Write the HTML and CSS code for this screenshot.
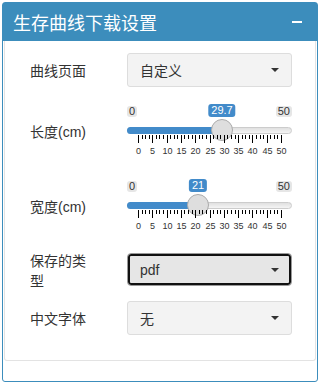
FILE: index.html
```html
<!DOCTYPE html>
<html>
  <head>
    <meta charset="utf-8">
    <title>生存曲线下载设置</title>
    <link rel="stylesheet" href="styles.css">
  </head>
  <body>
    <div class="box">
      <div class="box-header">
        <h3 class="box-title">生存曲线下载设置</h3>
        <span class="collapse-btn">
          <svg width="10" height="2" viewBox="0 0 10 2"><rect x="0" y="0" width="10" height="2" fill="#fff"/></svg>
        </span>
      </div>
      <div class="box-body">
        <div class="well">

          <div class="row row-first">
            <label class="control-label">曲线页面</label>
            <div class="select"><span>自定义</span><i class="caret"></i></div>
          </div>

          <div class="row row-slider1">
            <label class="control-label slider-label">长度(cm)</label>
            <div class="irs">
              <span class="irs-min">0</span>
              <span class="irs-max">50</span>
              <span class="irs-line"></span>
              <span class="irs-bar" style="width: 95px"></span>
              <span class="irs-single" style="left: 95px">29.7</span>
              <span class="irs-handle" style="left: 84px"></span>
              <svg class="irs-grid" width="165" height="22" viewBox="0 0 165 22"></svg>
            </div>
          </div>

          <div class="row row-slider2">
            <label class="control-label slider-label">宽度(cm)</label>
            <div class="irs">
              <span class="irs-min">0</span>
              <span class="irs-max">50</span>
              <span class="irs-line"></span>
              <span class="irs-bar" style="width: 71px"></span>
              <span class="irs-single" style="left: 71px">21</span>
              <span class="irs-handle" style="left: 60px"></span>
              <svg class="irs-grid" width="165" height="22" viewBox="0 0 165 22"></svg>
            </div>
          </div>

          <div class="row row-type">
            <label class="control-label narrow">保存的类型</label>
            <div class="select focused"><span>pdf</span><i class="caret"></i></div>
          </div>

          <div class="row row-font">
            <label class="control-label">中文字体</label>
            <div class="select"><span>无</span><i class="caret"></i></div>
          </div>

        </div>
      </div>
    </div>

    <script>
      // tick grid under each slider: 0..50, big tick every 5, 3 small ticks between
      var NS = 'http://www.w3.org/2000/svg';
      var addLine = function (svg, x, h) {
        var l = document.createElementNS(NS, 'line');
        l.setAttribute('x1', x); l.setAttribute('x2', x);
        l.setAttribute('y1', 0); l.setAttribute('y2', h);
        l.setAttribute('stroke', '#000');
        svg.appendChild(l);
      };
      document.querySelectorAll('.irs-grid').forEach(function (svg) {
        var start = 11, span = 143;
        for (var i = 0; i <= 10; i++) {
          var x = Math.round(start + span * i / 10) + 0.5;
          addLine(svg, x, 8);
          var txt = document.createElementNS(NS, 'text');
          txt.setAttribute('x', x);
          txt.setAttribute('y', 19);
          txt.setAttribute('text-anchor', 'middle');
          txt.textContent = i * 5;
          svg.appendChild(txt);
          if (i < 10) {
            for (var k = 1; k <= 3; k++) {
              addLine(svg, Math.round(start + span * (i + k / 4) / 10) + 0.5, 4);
            }
          }
        }
      });
    </script>
  </body>
</html>
```

FILE: styles.css
```css
body {
  margin: 0;
  font-family: "Liberation Sans", "Noto Sans CJK SC", sans-serif;
  color: #333;
  font-size: 14px;
}
.box {
  margin: 2px 1px 1px 2px;
  border: 1px solid #3c8dbc;
  border-radius: 3px;
  background: #fff;
}
.box-header {
  height: 38px;
  background: #3c8dbc;
  display: flex;
  align-items: center;
  justify-content: space-between;
  padding: 0 15px 0 10px;
}
.box-title {
  margin: 0;
  font-weight: normal;
  font-size: 18px;
  color: #fff;
  font-family: "Noto Sans CJK SC", sans-serif;
  line-height: 20px;
}
.collapse-btn {
  display: flex;
}
.box-body {
  padding: 0 1px 20px 1px;
}
.well {
  border: 1px solid #e3e3e3;
  border-top: none;
  border-radius: 0 0 3px 3px;
  padding: 12px 23px 25px 25px;
  display: flex;
  flex-direction: column;
}
.row {
  display: grid;
  grid-template-columns: 97px 165px;
  align-items: center;
}
.row-slider1 { margin-top: 17px; }
.row-slider2 { margin-top: 23px; }
.row-type {
  margin-top: 22px;
  grid-template-rows: 33px;
}
.row-font { margin-top: 15px; }
.control-label {
  font-family: "Noto Sans CJK SC", sans-serif;
  font-size: 14px;
  line-height: 20px;
}
.slider-label {
  font-family: "Liberation Sans", "Noto Sans CJK SC", sans-serif;
  padding-top: 3px;
}
.narrow {
  width: 60px;
}
.select {
  height: 34px;
  box-sizing: border-box;
  border: 1px solid #ddd;
  border-radius: 3px;
  background: #f3f3f3;
  display: flex;
  align-items: center;
  justify-content: space-between;
  padding: 0 12px;
  font-family: "Noto Sans CJK SC", sans-serif;
}
.select.focused {
  height: 33px;
  background: #e6e6e6;
  border: 1px solid #999;
  box-shadow: inset 0 0 0 2px #111;
  border-radius: 4px;
  font-family: "Liberation Sans", sans-serif;
}
.caret {
  width: 0;
  height: 0;
  border-left: 4px solid transparent;
  border-right: 4px solid transparent;
  border-top: 4px solid #333;
}
.irs {
  position: relative;
  height: 52px;
  font-family: "Liberation Sans", sans-serif;
}
.irs-min, .irs-max {
  position: absolute;
  top: 2px;
  font-size: 11px;
  line-height: 11px;
  padding: 0 2px;
  background: #e6e6e6;
  border-radius: 3px;
  color: #333;
}
.irs-min { left: 0; }
.irs-max { right: 0; }
.irs-single {
  position: absolute;
  top: 0;
  transform: translateX(-50%);
  font-size: 11px;
  line-height: 13px;
  padding: 0 3px;
  background: #428bca;
  color: #fff;
  border-radius: 3px;
}
.irs-line {
  position: absolute;
  top: 23px;
  left: 0;
  right: 0;
  height: 7px;
  box-sizing: border-box;
  background: linear-gradient(#e0e0e0, #f4f4f4);
  border: 1px solid #ccc;
  border-radius: 4px;
}
.irs-bar {
  position: absolute;
  top: 23px;
  left: 0;
  height: 7px;
  background: #428bca;
  border-radius: 4px 0 0 4px;
}
.irs-handle {
  position: absolute;
  top: 15px;
  width: 22px;
  height: 22px;
  box-sizing: border-box;
  border: 1px solid #ababab;
  border-radius: 50%;
  background: #dedede;
}
.irs-grid {
  position: absolute;
  top: 31px;
  left: 0;
  font-size: 9px;
  fill: #333;
}
```
